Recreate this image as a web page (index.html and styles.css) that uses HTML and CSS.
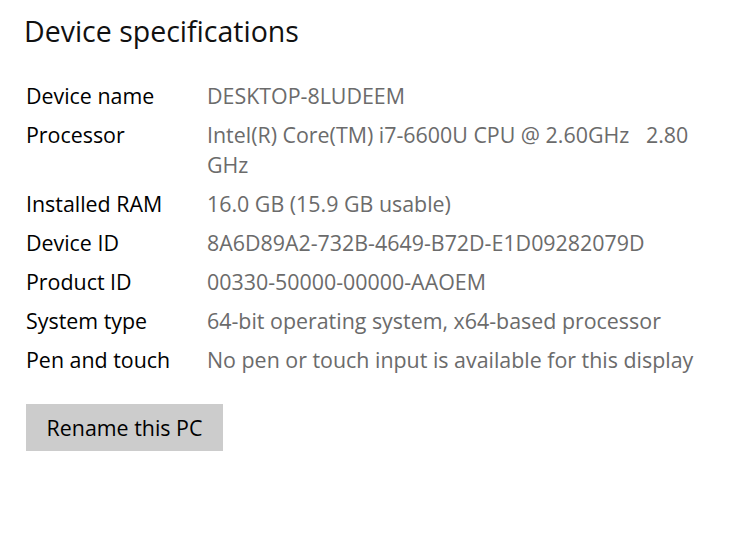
FILE: index.html
```html
<!DOCTYPE html>
<html lang="en">
<head>
  <meta charset="UTF-8">
  <title>Device specifications</title>
  <link rel="stylesheet" href="styles.css">
</head>
<body>

<div class="specs">
  <h1>Device specifications</h1>

  <div class="spec-list">
    <div class="label">Device name</div>
    <div class="value">DESKTOP-8LUDEEM</div>

    <div class="label">Processor</div>
    <div class="value">Intel(R) Core(TM) i7-6600U CPU @ 2.60GHz&nbsp;&nbsp;&nbsp;2.80 GHz</div>

    <div class="label">Installed RAM</div>
    <div class="value">16.0 GB (15.9 GB usable)</div>

    <div class="label">Device ID</div>
    <div class="value">8A6D89A2-732B-4649-B72D-E1D09282079D</div>

    <div class="label">Product ID</div>
    <div class="value">00330-50000-00000-AAOEM</div>

    <div class="label">System type</div>
    <div class="value">64-bit operating system, x64-based processor</div>

    <div class="label">Pen and touch</div>
    <div class="value">No pen or touch input is available for this display</div>
  </div>

  <button class="rename">Rename this PC</button>
</div>

</body>
</html>
```

FILE: styles.css
```css
body {
  margin: 0;
  padding: 0;
  background: #fff;
  font-family: 'Open Sans', 'Noto Sans', sans-serif;
  color: #000;
}
.specs {
  padding: 11px 0 0 24px;
}
h1 {
  font-size: 28.5px;
  font-weight: normal;
  margin: 0 0 30px 0;
  line-height: 40px;
  color: #111;
}
.spec-list {
  display: grid;
  grid-template-columns: 181px 505px;
  row-gap: 9px;
  font-size: 21.4px;
  line-height: 30px;
  margin-left: 2px;
}
.label {
  color: #000;
}
.value {
  color: #6b6b6b;
}
button.rename {
  margin: 29px 0 0 2px;
  width: 197px;
  height: 47px;
  background: #cccccc;
  border: none;
  font-family: inherit;
  font-size: 21.4px;
  color: #000;
  padding: 0;
}
```
